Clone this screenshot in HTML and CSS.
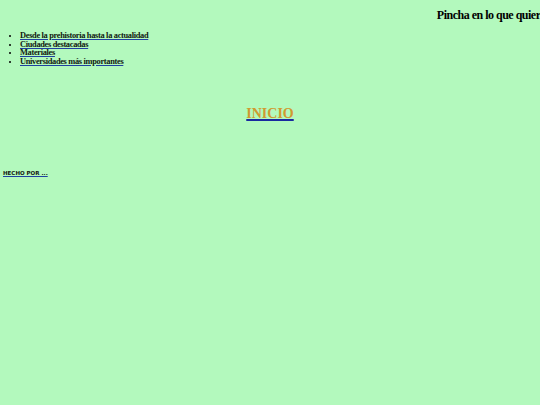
FILE: index.html
```html
<!DOCTYPE html>
<html lang="es">
<head>
<meta charset="utf-8">
<title>Inicio</title>
<link rel="stylesheet" href="styles.css">
</head>
<body>
<h1 class="top-title">Pincha en lo que quiera</h1>
<ul class="menu">
<li><a href="#">Desde la prehistoria hasta la actualidad</a></li>
<li><a href="#">Ciudades destacadas</a></li>
<li><a href="#">Materiales</a></li>
<li><a href="#">Universidades más importantes</a></li>
</ul>
<div class="center"><a class="inicio" href="#">INICIO</a></div>
<a class="credit" href="#">HECHO POR ...</a>
</body>
</html>
```
FILE: styles.css
```css
html, body { margin: 0; padding: 0; }
body {
  background: #b3f9bd;
  font-family: "Liberation Serif", "Times New Roman", serif;
  color: #000;
  width: 540px;
  height: 405px;
  overflow: hidden;
}
.top-title {
  margin: 8px -6px 0 0;
  font-size: 12px;
  letter-spacing: -0.5px;
  font-weight: bold;
  text-align: right;
  line-height: 14px;
  white-space: nowrap;
}
.menu {
  margin: 10px 0 0 0;
  padding: 0 0 0 20px;
  font-size: 8.4px;
  letter-spacing: -0.32px;
  line-height: 8.7px;
  font-weight: bold;
}
.menu a { color: #102010; text-decoration: underline; text-decoration-color: #2040a0; }
.center { text-align: center; margin-top: 37px; }
.inicio {
  font-size: 14px;
  font-weight: bold;
  color: #d09a30;
  text-decoration: underline;
  text-decoration-color: #1a2aa0;
  text-decoration-thickness: 2px;
}
.credit {
  display: inline-block;
  margin: 48px 0 0 3px;
  font-family: "DejaVu Sans", sans-serif;
  font-size: 5.5px;
  font-weight: bold;
  color: #102010;
  text-decoration-color: #2040a0;
}
```
